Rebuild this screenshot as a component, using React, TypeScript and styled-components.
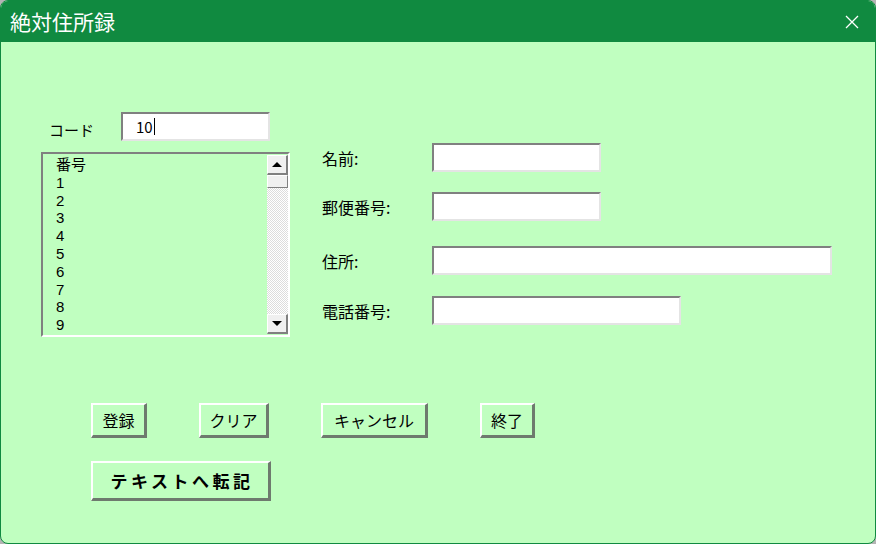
import React from "react";
import styled, { createGlobalStyle } from "styled-components";

const GlobalStyle = createGlobalStyle`
  html, body {
    margin: 0;
    padding: 0;
    background: #b4b4b4;
    font-family: "Noto Sans CJK JP", "Noto Sans", sans-serif;
  }
`;

const Window = styled.div`
  width: 876px;
  height: 544px;
  box-sizing: border-box;
  border-radius: 8px;
  overflow: hidden;
  border: 1px solid #108a40;
  display: flex;
  flex-direction: column;
  background: #c0ffc0;
`;

const TitleBar = styled.div`
  height: 41px;
  flex-shrink: 0;
  background: #108a40;
  display: flex;
  align-items: center;
  justify-content: space-between;
  padding: 0 16px 0 9px;
  color: #fff;
  font-size: 21px;
  line-height: 1;
`;

const CloseIcon = styled.svg`
  width: 14px;
  height: 14px;
  margin-top: 1px;
`;

const Body = styled.div`
  flex: 1;
  display: flex;
  flex-direction: column;
  padding-left: 40px;
`;

const Top = styled.div`
  display: flex;
`;

const LeftCol = styled.div`
  display: flex;
  flex-direction: column;
  padding-top: 70px;
`;

const CodeRow = styled.div`
  display: flex;
  align-items: center;
  height: 29px;
`;

const CodeLabel = styled.div`
  width: 80px;
  padding-left: 8px;
  box-sizing: border-box;
  font-size: 15px;
  color: #000;
  line-height: 1;
  margin-top: 6px;
`;

const TextBox = styled.div<{ w: number }>`
  width: ${(p) => p.w}px;
  height: 29px;
  box-sizing: border-box;
  background: #fff;
  border-top: 2px solid #808080;
  border-left: 2px solid #808080;
  border-bottom: 2px solid #e4e4e4;
  border-right: 2px solid #e4e4e4;
  display: flex;
  align-items: center;
  padding-left: 13px;
  font-size: 15px;
  color: #000;
`;

const Caret = styled.span`
  display: inline-block;
  width: 1px;
  height: 17px;
  background: #000;
  margin-left: 1px;
`;

const ListBox = styled.div`
  margin-top: 11px;
  width: 249px;
  height: 185px;
  box-sizing: border-box;
  border-top: 2px solid #808080;
  border-left: 2px solid #808080;
  border-bottom: 2px solid #fff;
  border-right: 2px solid #fff;
  display: flex;
  overflow: hidden;
`;

const ListItems = styled.div`
  flex: 1;
  padding: 2px 0 0 13px;
  font-family: "Liberation Sans", "Noto Sans CJK JP", sans-serif;
  font-size: 15px;
  line-height: 17.8px;
  color: #000;
`;

const ScrollBar = styled.div`
  width: 21px;
  margin: 1px 0 1px 0;
  display: flex;
  flex-direction: column;
  background: repeating-conic-gradient(#ffffff 0 25%, #dcdcdc 0 50%) 0 0 / 2px 2px;
`;

const ScrollButton = styled.div`
  height: 20px;
  box-sizing: border-box;
  background: #f0f0f0;
  border-top: 1px solid #fff;
  border-left: 1px solid #fff;
  border-bottom: 2px solid #808080;
  border-right: 2px solid #808080;
  display: flex;
  align-items: center;
  justify-content: center;
`;

const Thumb = styled.div`
  height: 13px;
  box-sizing: border-box;
  background: #f0f0f0;
  border-top: 1px solid #fff;
  border-left: 1px solid #fff;
  border-bottom: 1px solid #808080;
  border-right: 1px solid #808080;
`;

const Track = styled.div`
  flex: 1;
`;

const Arrow = styled.div<{ down?: boolean }>`
  width: 0;
  height: 0;
  border-left: 5px solid transparent;
  border-right: 5px solid transparent;
  ${(p) =>
    p.down ? "border-top: 5px solid #000;" : "border-bottom: 5px solid #000;"}
`;

const RightCol = styled.div`
  display: flex;
  flex-direction: column;
  margin-left: 32px;
  padding-top: 101px;
`;

const FieldRow = styled.div<{ mt: number }>`
  display: flex;
  align-items: center;
  margin-top: ${(p) => p.mt}px;
`;

const FieldLabel = styled.div`
  width: 110px;
  font-size: 16px;
  color: #000;
  line-height: 1;
  margin-top: 1px;
`;

const ButtonRow = styled.div<{ mt: number }>`
  display: flex;
  gap: 52px;
  margin-top: ${(p) => p.mt}px;
  padding-left: 50px;
`;

const Button = styled.div<{ w: number; h?: number; bold?: boolean }>`
  width: ${(p) => p.w}px;
  height: ${(p) => p.h ?? 35}px;
  box-sizing: border-box;
  background: #c0ffc0;
  border-top: 2px solid #fff;
  border-left: 2px solid #fff;
  border-bottom: 3px solid #6e7a6e;
  border-right: 3px solid #6e7a6e;
  display: flex;
  align-items: center;
  justify-content: center;
  color: #000;
  font-size: ${(p) => (p.bold ? 17 : 16)}px;
  font-weight: ${(p) => (p.bold ? 700 : 400)};
  letter-spacing: ${(p) => (p.bold ? "3.5px" : "0")};
  padding-left: ${(p) => (p.bold ? "3px" : "0")};
  line-height: 1;
`;

const rows = ["番号", "1", "2", "3", "4", "5", "6", "7", "8", "9"];

const App: React.FC = () => {
  return (
    <>
      <GlobalStyle />
      <Window>
        <TitleBar>
          <span>絶対住所録</span>
          <CloseIcon viewBox="0 0 14 14">
            <path d="M1 1 L13 13 M13 1 L1 13" stroke="#fff" strokeWidth="1.3" fill="none" />
          </CloseIcon>
        </TitleBar>
        <Body>
          <Top>
            <LeftCol>
              <CodeRow>
                <CodeLabel>コード</CodeLabel>
                <TextBox w={149}>
                  10<Caret />
                </TextBox>
              </CodeRow>
              <ListBox>
                <ListItems>
                  {rows.map((r) => (
                    <div key={r}>{r}</div>
                  ))}
                </ListItems>
                <ScrollBar>
                  <ScrollButton>
                    <Arrow />
                  </ScrollButton>
                  <Thumb />
                  <Track />
                  <ScrollButton>
                    <Arrow down />
                  </ScrollButton>
                </ScrollBar>
              </ListBox>
            </LeftCol>
            <RightCol>
              <FieldRow mt={0}>
                <FieldLabel>名前:</FieldLabel>
                <TextBox w={169} />
              </FieldRow>
              <FieldRow mt={20}>
                <FieldLabel>郵便番号:</FieldLabel>
                <TextBox w={169} />
              </FieldRow>
              <FieldRow mt={25}>
                <FieldLabel>住所:</FieldLabel>
                <TextBox w={400} />
              </FieldRow>
              <FieldRow mt={21}>
                <FieldLabel>電話番号:</FieldLabel>
                <TextBox w={249} />
              </FieldRow>
            </RightCol>
          </Top>
          <ButtonRow mt={66}>
            <Button w={56}>登録</Button>
            <Button w={70}>クリア</Button>
            <Button w={107}>キャンセル</Button>
            <Button w={55}>終了</Button>
          </ButtonRow>
          <ButtonRow mt={23}>
            <Button w={180} h={40} bold>
              テキストへ転記
            </Button>
          </ButtonRow>
        </Body>
      </Window>
    </>
  );
};

export default App;
